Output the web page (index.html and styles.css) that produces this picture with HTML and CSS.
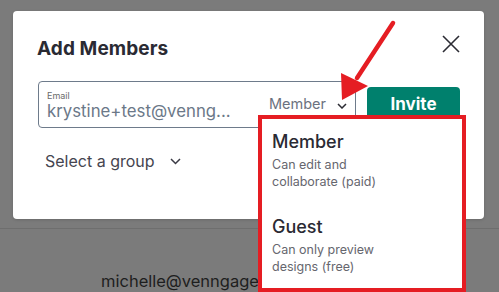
FILE: index.html
```html
<!DOCTYPE html>
<html>
<head>
<meta charset="utf-8">
<link rel="stylesheet" href="styles.css">
</head>
<body>
<div class="backdrop">
  <div class="backdrop-top"></div>
  <div class="backdrop-row">michelle@venngage.com</div>
</div>

<div class="modal">
  <div class="modal-head">
    <h2 class="title">Add Members</h2>
    <button class="close" aria-label="Close">
      <svg width="18" height="18" viewBox="0 0 18 18"><path d="M1 1 L17 17 M17 1 L1 17" stroke="#2b2b33" stroke-width="1.6" fill="none"/></svg>
    </button>
  </div>
  <div class="invite-row">
    <div class="field">
      <div class="field-text">
        <span class="field-label">Email</span>
        <span class="field-value">krystine+test@venng...</span>
      </div>
      <div class="role">
        <span>Member</span>
        <svg width="10" height="6" viewBox="0 0 10 6"><path d="M1 1 L5 5 L9 1" stroke="#2b2b33" stroke-width="1.5" fill="none"/></svg>
      </div>
    </div>
    <button class="invite">Invite</button>
  </div>
  <div class="group">
    <span>Select a group</span>
    <svg width="11" height="7" viewBox="0 0 11 7"><path d="M1 1 L5.5 5.5 L10 1" stroke="#3a3a44" stroke-width="1.5" fill="none"/></svg>
  </div>

  <div class="menu">
    <div class="option">
      <div class="option-title">Member</div>
      <div class="option-desc">Can edit and<br>collaborate (paid)</div>
    </div>
    <div class="option">
      <div class="option-title">Guest</div>
      <div class="option-desc">Can only preview<br>designs (free)</div>
    </div>
  </div>
</div>

<svg class="arrow" width="499" height="292" viewBox="0 0 499 292">
  <line x1="393" y1="23" x2="357" y2="78" stroke="#e51d23" stroke-width="4.5" stroke-linecap="round"/>
  <polygon points="341,73 368,86 342,100" fill="#e51d23"/>
</svg>
</body>
</html>
```

FILE: styles.css
```css
* { box-sizing: border-box; }
html, body { margin: 0; padding: 0; }
body {
  width: 499px;
  height: 292px;
  overflow: hidden;
  background: #7b7b7b;
  font-family: Inter, "Noto Sans", sans-serif;
  position: relative;
}
.backdrop-top {
  height: 229px;
  border-bottom: 1px solid #6e6e6e;
}
.backdrop-row {
  padding: 42px 0 0 101px;
  font-size: 16.5px;
  color: #1e1e1e;
  line-height: 20px;
}
.modal {
  position: absolute;
  left: 13px;
  top: 11px;
  width: 471px;
  height: 208px;
  background: #fff;
  border-radius: 4px;
  padding: 0 24px 0 25px;
  box-shadow: 0 1px 3px rgba(0,0,0,0.15);
}
.modal-head {
  display: flex;
  justify-content: space-between;
  align-items: flex-start;
  padding-top: 26px;
}
.title {
  margin: 0 0 0 -1px;
  font-size: 19px;
  font-weight: 700;
  color: #2a2a33;
  line-height: 23px;
  letter-spacing: 0.1px;
}
.close {
  border: 0;
  background: none;
  padding: 0;
  margin: -2px 0 0 0;
  width: 18px;
  height: 18px;
  display: flex;
}
.invite-row {
  display: flex;
  align-items: center;
  gap: 11px;
  margin-top: 21px;
}
.field {
  width: 318px;
  height: 47px;
  border: 1px solid #6e7b8b;
  border-radius: 4px;
  display: flex;
  align-items: center;
  padding: 0 0 0 8px;
}
.field-text {
  flex: 1;
  display: flex;
  flex-direction: column;
  padding-top: 2px;
}
.field-label {
  font-size: 9px;
  color: #6b6b6b;
  line-height: 10px;
}
.field-value {
  font-size: 16.8px;
  color: #6b7888;
  line-height: 20px;
}
.role {
  display: flex;
  align-items: center;
  gap: 11px;
  font-size: 14.5px;
  color: #6b7280;
  padding-right: 8px;
  margin-top: -2px;
}
.role svg { margin-top: 4px; }
.invite {
  width: 93px;
  height: 35px;
  border: 0;
  border-radius: 4px;
  background: #00806d;
  color: #fff;
  font-family: Inter, sans-serif;
  font-size: 17px;
  font-weight: 700;
  padding: 0;
  margin-top: -1px;
}
.group {
  display: flex;
  align-items: center;
  gap: 15px;
  margin: 23px 0 0 7px;
  font-size: 16px;
  color: #45454f;
  line-height: 20px;
}
.group svg { margin-top: 1px; }
.menu {
  position: absolute;
  left: 245px;
  top: 104px;
  width: 208px;
  height: 177px;
  background: #fff;
  border: 4.5px solid #e51d23;
  padding: 12px 10px 0 10px;
  display: flex;
  flex-direction: column;
  gap: 26px;
}
.option-title {
  font-size: 18px;
  font-weight: 500;
  color: #2a2a33;
  line-height: 22px;
}
.option-desc {
  margin-top: 3px;
  font-size: 12.5px;
  color: #66666e;
  line-height: 17px;
}
.arrow {
  position: absolute;
  left: 0;
  top: 0;
  pointer-events: none;
}
```
